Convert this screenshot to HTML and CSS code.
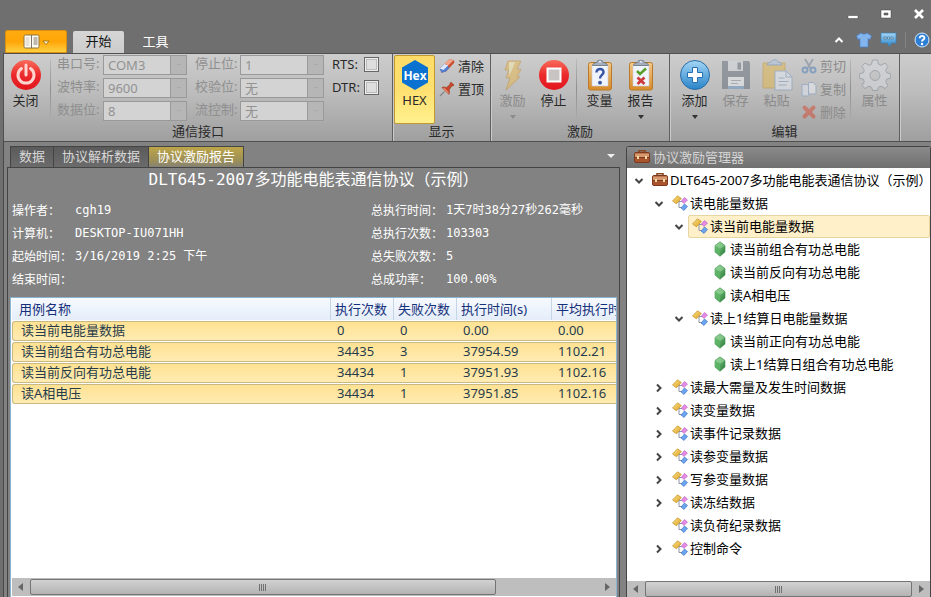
FILE: index.html
```html
<!DOCTYPE html>
<html lang="zh-CN">
<head>
<meta charset="utf-8">
<meta name="viewport" content="width=device-width, initial-scale=1">
<title>协议激励报告</title>
<link rel="stylesheet" href="styles.css">
</head>
<body>
<svg class="defs" aria-hidden="true">
  <defs>
    <linearGradient id="gold" x1="0" y1="0" x2="1" y2="1"><stop offset="0" stop-color="#fde98e"/><stop offset="1" stop-color="#d99a1c"/></linearGradient>
    <linearGradient id="leaf" x1="0" y1="0" x2="1" y2="1"><stop offset="0" stop-color="#9ad89c"/><stop offset="1" stop-color="#237a34"/></linearGradient>
    <linearGradient id="red" x1="0" y1="0" x2="0" y2="1"><stop offset="0" stop-color="#f96a5a"/><stop offset=".5" stop-color="#ea2a2c"/><stop offset="1" stop-color="#e3141c"/></linearGradient>
    <linearGradient id="blue" x1="0" y1="0" x2="0" y2="1"><stop offset="0" stop-color="#a4d6f6"/><stop offset="1" stop-color="#2884c8"/></linearGradient>
    <linearGradient id="board" x1="0" y1="0" x2="0" y2="1"><stop offset="0" stop-color="#f4c987"/><stop offset="1" stop-color="#d88a28"/></linearGradient>
    <symbol id="case" viewBox="0 0 16 16">
      <path d="M5 4V1.800h6V4" fill="none" stroke="#8a4a26" stroke-width="1.600"/>
      <rect x=".5" y="3.500" width="15" height="10" rx="1.500" fill="#a9542d" stroke="#7d3a1e"/>
      <path d="M1 4.500h14v3.500H1z" fill="#d79a70"/><path d="M1 8.500h14" stroke="#7b3a20"/>
      <path d="M3 7h2v3H3zM11 7h2v3h-2z" fill="#f4d9a0"/>
    </symbol>
    <symbol id="node" viewBox="0 0 16 16">
      <path d="M7 6.500v6h4M7 6.500h4" fill="none" stroke="#8b93a8"/>
      <path d="M.5 6 5.500.8 9.300 3.500 4.500 8.800z" fill="url(#gold)" stroke="#c38d20" stroke-width=".7"/>
      <path d="m12.500 2.500 3 2.500-3.500 3.500-2.500-2.500z" fill="#e58be4" stroke="#b55bc0" stroke-width=".6"/>
      <path d="m12.500 9 3 2.500-3.500 4-3-2.500z" fill="#6ba5f0" stroke="#3769b8" stroke-width=".6"/>
    </symbol>
    <symbol id="gem" viewBox="0 0 16 16">
      <path d="M8 .8 13 4.500v6.500L8 15.300 3 11V4.500z" fill="url(#leaf)" stroke="#3c8f48" stroke-width=".6"/>
      <path d="m3.300 4.800 4.700 3 4.700-3L8 1.200z" fill="#8fd293" opacity=".7"/><path d="M8 8v6.800L3.300 10.800v-6z" fill="#5bb565" opacity=".8"/>
    </symbol>
    <symbol id="down" viewBox="0 0 10 10"><path d="m1.500 3 3.500 3.500L8.500 3" fill="none" stroke="#444" stroke-width="2"/></symbol>
    <symbol id="right" viewBox="0 0 10 10"><path d="m3 1.500 3.500 3.500L3 8.500" fill="none" stroke="#444" stroke-width="2"/></symbol>
    <symbol id="clip" viewBox="0 0 32 32">
      <rect x="4.500" y="3.500" width="23" height="27.500" rx="2" fill="url(#board)" stroke="#b87a2c"/>
      <path d="M8 6h16v21H8z" fill="#f0f4fd" stroke="#c7cede" stroke-width=".6"/>
      <path d="M8.500 6.500c0-2 2-2.500 4-3C13 .5 19 .5 19.500 3.500c2 .5 4 1 4 3z" fill="#a5afbb" stroke="#66717f" stroke-width=".8"/><circle cx="16" cy="2.800" r="1" fill="#eef"/>
    </symbol>
  </defs>
</svg>
<div class="window">
  <header class="titlebar">
    <div class="caption">
      <button class="cap" aria-label="最小化"><svg width="12" height="12" viewBox="0 0 12 12"><path d="M1 7.500h10v3H1z" fill="#fff" stroke="#444" stroke-width=".5"/></svg></button>
      <button class="cap" aria-label="最大化"><svg width="12" height="12" viewBox="0 0 12 12"><path d="M1 2h10v8H1zm3 3v2h4V5z" fill="#fff" fill-rule="evenodd" stroke="#444" stroke-width=".5"/></svg></button>
      <button class="cap" aria-label="关闭窗口"><svg width="12" height="12" viewBox="0 0 12 12"><path d="m2 2 8 8m0-8-8 8" stroke="#fff" stroke-width="2.600"/></svg></button>
    </div>
    <nav class="tabs">
      <button class="file" aria-label="文件">
        <svg width="28" height="16" viewBox="0 0 28 16"><rect x="2" y="1" width="15" height="13" rx="1.500" fill="#fffdf4" stroke="#8a7440"/><path d="M9.500 1v13M11.500 4h4M11.500 6h4M11.500 8h4M11.500 10h4" stroke="#7c7464"/><path d="M3.500 3h4v9h-4z" fill="#e7e3d8"/><path d="M21 7h6l-3 3.500z" fill="#fff6c0" stroke="#8d6c18" stroke-width=".8"/></svg>
      </button>
      <button class="tab current">开始</button>
      <button class="tab">工具</button>
      <div class="tools">
        <button class="mini" aria-label="折叠"><svg width="10" height="10" viewBox="0 0 10 10"><path d="M1.500 7 5 3.500 8.500 7" fill="none" stroke="#fff" stroke-width="2"/></svg></button>
        <button class="mini" aria-label="皮肤"><svg width="16" height="16" viewBox="0 0 16 16"><path d="M5 1q3 2.500 6 0l4.500 3-1.500 3.500-2-.8V15H4V6.700l-2 .8L.5 4z" fill="#82b5ee" stroke="#4c7fca" stroke-width=".7"/></svg></button>
        <button class="mini" aria-label="消息"><svg width="17" height="16" viewBox="0 0 17 16"><path d="M1 1h15v10h-4.500L9.500 14.500 7.500 11H1z" fill="url(#blue)" stroke="#3c83b5" stroke-width=".7"/><path d="M4 5h2v2H4zm3.500 0h2v2h-2zm3.500 0h2v2h-2z" fill="#d4ecfb" stroke="#3b6285" stroke-width=".6"/></svg></button>
        <span class="bar"></span>
        <button class="mini" aria-label="帮助"><svg width="16" height="16" viewBox="0 0 16 16"><circle cx="8" cy="8" r="7" fill="#2d7fd6" stroke="#d4e8fc"/><path d="M5.700 6.300c0-3.300 5-3 4.700-.2C10.200 7.700 8 7.600 8 9.500" fill="none" stroke="#fff" stroke-width="1.900"/><circle cx="8" cy="12" r="1.200" fill="#fff"/></svg></button>
      </div>
    </nav>
  </header>

  <section class="ribbon">
    <div class="group comm">
      <div class="items">
        <button class="big"><svg width="32" height="32" viewBox="0 0 32 32"><circle cx="16" cy="16" r="15" fill="url(#red)"/><path d="M11.500 9.500a8 8 0 1 0 9 0M16 6v10" fill="none" stroke="#ffd5d0" stroke-width="3" stroke-linecap="round"/></svg><span>关闭</span></button>
        <i class="rule"></i>
        <div class="fields">
          <label for="port">串口号:</label><select id="port" disabled><option>COM3</option></select>
          <label for="stop">停止位:</label><select id="stop" disabled><option>1</option></select>
          <label for="baud">波特率:</label><select id="baud" disabled><option>9600</option></select>
          <label for="parity">校验位:</label><select id="parity" disabled><option>无</option></select>
          <label for="bits">数据位:</label><select id="bits" disabled><option>8</option></select>
          <label for="flow">流控制:</label><select id="flow" disabled><option>无</option></select>
        </div>
        <div class="checks">
          <label for="rts">RTS:</label><input type="checkbox" id="rts">
          <label for="dtr">DTR:</label><input type="checkbox" id="dtr">
        </div>
      </div>
      <div class="name">通信接口</div>
    </div>

    <div class="group show">
      <div class="items">
        <button class="big pressed"><svg width="32" height="32" viewBox="0 0 32 32"><path d="M16 1 29 8.500v15L16 31 3 23.500v-15z" fill="#0b72d2"/><text x="16" y="20.500" text-anchor="middle" class="hex">Hex</text></svg><span>HEX</span></button>
        <div class="stack">
          <button class="small"><svg width="16" height="16" viewBox="0 0 16 16"><path d="M.8 10.500 10 1.500l4.500.5 1 2.500L7 13.500l-4.500 1.200z" fill="#c94f30"/><path d="M.8 10.500 5.500 6l5 3.800-3.500 3.700-4.500 1.200z" fill="#4f7fd0"/><path d="M.8 10.500 5.500 6l3.800 1.200L4.500 12z" fill="#dbe9ff"/><path d="M5.500 6 10 1.500l4.500.8-5 5z" fill="#f3a58c"/></svg><span>清除</span></button>
          <button class="small"><svg width="16" height="16" viewBox="0 0 16 16"><path d="m1 15 4.500-4.500" stroke="#888" stroke-width="1.200"/><path d="M3 6.500c1.500-.8 3-.6 4.300.2L11 3.500c-.2-1 .2-1.800 1-2.300L15 4c-.6.900-1.400 1.200-2.300 1L10 9c.7 1.600.7 3-.2 4.300z" fill="#c9472a" stroke="#94351c" stroke-width=".6"/><path d="m4.500 7 5 5" stroke="#ec8a70" stroke-width="1.200"/></svg><span>置顶</span></button>
        </div>
      </div>
      <div class="name">显示</div>
    </div>

    <div class="group run">
      <div class="items">
        <button class="big" disabled><svg width="32" height="32" viewBox="0 0 32 32"><path d="M11 2h13l-4 8h4l-4 8h3L9 31l4-12H9l3-8H8z" fill="#eeb43c" stroke="#c68a20"/><path d="M12 3h6l-3 8-3 6z" fill="#fff0a8"/></svg><span>激励</span><i class="more"></i></button>
        <button class="big"><svg width="32" height="32" viewBox="0 0 32 32"><circle cx="16" cy="16" r="15" fill="url(#red)"/><path d="M9.500 9.500h13v13h-13z" fill="#c9c4c4" stroke="#fff" stroke-width="2"/></svg><span>停止</span></button>
        <i class="rule"></i>
        <button class="big"><svg width="32" height="32" viewBox="0 0 32 32"><use href="#clip"/><path d="M12.500 13.500c0-5 7.500-4.500 7 0-.3 2.500-3.500 2.500-3.500 6" fill="none" stroke="#3654a4" stroke-width="2.400"/><circle cx="16" cy="23.700" r="1.900" fill="#3654a4"/></svg><span>变量</span></button>
        <button class="big"><svg width="32" height="32" viewBox="0 0 32 32"><use href="#clip"/><path d="m12 12 3 3 6-5.500" fill="none" stroke="#599d27" stroke-width="2.500"/><path d="m12.500 18.500 7 6.500m0-6.500-7 6.500" stroke="#cf3b3b" stroke-width="2.800"/></svg><span>报告</span><i class="more"></i></button>
      </div>
      <div class="name">激励</div>
    </div>

    <div class="group edit">
      <div class="items">
        <button class="big"><svg width="32" height="32" viewBox="0 0 32 32"><circle cx="16" cy="16" r="14.500" fill="url(#blue)" stroke="#286da8"/><path d="M13.500 8.500h5v5h5v5h-5v5h-5v-5h-5v-5h5z" fill="#fff" stroke="#276eb0"/></svg><span>添加</span><i class="more"></i></button>
        <button class="big" disabled><svg width="32" height="32" viewBox="0 0 32 32"><path d="M2 2h27l1 2v26H2z" fill="#55606f"/><path d="M8 2h15v10H8z" fill="#d5dae1"/><path d="M17.500 3.500h3.500v7h-3.500z" fill="#53606f"/><path d="M8 18h16v12H8z" fill="#f2f5f9"/><path d="M8 27h16v3H8z" fill="#5e8fc4"/><path d="M11 21.500h10M11 24.500h7" stroke="#8493a5"/></svg><span>保存</span></button>
        <button class="big" disabled><svg width="32" height="32" viewBox="0 0 32 32"><path d="M2 4h22v25H2z" fill="#e6b436" stroke="#c29121"/><path d="M6 6c0-3 3-2 4-3 1-3 6-3 7 0 1 1 4 0 4 3z" fill="#a9c4e4" stroke="#5d7ca5"/><path d="M14 12h11l6 6v13H14z" fill="#eaf2fd" stroke="#7597c3"/><path d="M25 12v6h6M17.500 19h6M17.500 22.500h10M17.500 26h8" fill="none" stroke="#7597c3"/></svg><span>粘贴</span></button>
        <div class="stack">
          <button class="small" disabled><svg width="16" height="16" viewBox="0 0 16 16"><path d="m4 1 6 10M12 1 6 11" stroke="#66788f" stroke-width="1.800"/><circle cx="4" cy="12" r="2.500" fill="none" stroke="#3972b8" stroke-width="1.900"/><circle cx="12" cy="12" r="2.500" fill="none" stroke="#3972b8" stroke-width="1.900"/></svg><span>剪切</span></button>
          <button class="small" disabled><svg width="16" height="16" viewBox="0 0 16 16"><path d="M1 3.500h5l2 2V15H1z" fill="#e5effc" stroke="#7597c3"/><path d="M7.500 1.500H12l3 3V13H7.500z" fill="#f4f8ff" stroke="#7597c3"/></svg><span>复制</span></button>
          <button class="small" disabled><svg width="16" height="16" viewBox="0 0 16 16"><path d="m3.500 3.500 9 9m0-9-9 9" stroke="#dc3c24" stroke-width="4" stroke-linecap="round"/></svg><span>删除</span></button>
        </div>
        <i class="rule"></i>
        <button class="big" disabled><svg width="32" height="32" viewBox="0 0 32 32"><path d="m13.500 1 5 0 1 4.300 2.500 1L26 4l3 3.300-2.300 4 1 2.500 4 1v4.400l-4 1-1 2.500 2.300 4L26 29.500l-4-2.300-2.500 1-1 3.300h-5l-1-3.300-2.500-1-4 2.300-3-2.800 2.300-4-1-2.500-4-1v-4.400l4-1 1-2.500L3 7.300 6 4l4 2.300 2.500-1zM16 11.500a5 5 0 1 0 0 10 5 5 0 0 0 0-10z" fill="#d8dde3" fill-rule="evenodd" stroke="#75808e"/></svg><span>属性</span></button>
      </div>
      <div class="name">编辑</div>
    </div>
  </section>

  <main class="workspace">
    <section class="document">
      <nav class="doctabs">
        <button>数据</button><button>协议解析数据</button><button class="active">协议激励报告</button>
        <i class="list"></i>
      </nav>
      <div class="report">
        <h1>DLT645-2007多功能电能表通信协议（示例）</h1>
        <div class="summary">
          <dl>
            <dt>操作者：</dt><dd>cgh19</dd>
            <dt>计算机：</dt><dd>DESKTOP-IU071HH</dd>
            <dt>起始时间：</dt><dd>3/16/2019 2:25 下午</dd>
            <dt>结束时间：</dt><dd></dd>
          </dl>
          <dl>
            <dt>总执行时间：</dt><dd>1天7时38分27秒262毫秒</dd>
            <dt>总执行次数：</dt><dd>103303</dd>
            <dt>总失败次数：</dt><dd>5</dd>
            <dt>总成功率：</dt><dd>100.00%</dd>
          </dl>
        </div>
        <div class="grid">
          <div class="view">
            <table>
              <colgroup><col class="c-name"><col class="c-count"><col class="c-count"><col class="c-time"><col class="c-avg"></colgroup>
              <thead><tr><th>用例名称</th><th>执行次数</th><th>失败次数</th><th>执行时间(s)</th><th>平均执行时间</th></tr></thead>
              <tbody>
                <tr><td>读当前电能量数据</td><td>0</td><td>0</td><td>0.00</td><td>0.00</td></tr>
                <tr><td>读当前组合有功总电能</td><td>34435</td><td>3</td><td>37954.59</td><td>1102.21</td></tr>
                <tr><td>读当前反向有功总电能</td><td>34434</td><td>1</td><td>37951.93</td><td>1102.16</td></tr>
                <tr><td>读A相电压</td><td>34434</td><td>1</td><td>37951.85</td><td>1102.16</td></tr>
              </tbody>
            </table>
          </div>
          <div class="scroll"><i class="prev"></i><div class="track"><div class="thumb wide"></div></div><i class="next"></i></div>
        </div>
      </div>
    </section>

    <aside class="manager">
      <h2><svg width="16" height="16"><use href="#case"/></svg>协议激励管理器</h2>
      <div class="treebox">
        <ul class="tree">
          <li><div class="row"><svg class="exp"><use href="#down"/></svg><span class="entry"><svg class="ico"><use href="#case"/></svg>DLT645-2007多功能电能表通信协议（示例）</span></div>
            <ul>
              <li><div class="row"><svg class="exp"><use href="#down"/></svg><span class="entry"><svg class="ico"><use href="#node"/></svg>读电能量数据</span></div>
                <ul>
                  <li><div class="row"><svg class="exp"><use href="#down"/></svg><span class="entry selected"><svg class="ico"><use href="#node"/></svg>读当前电能量数据</span></div>
                    <ul>
                      <li><div class="row"><i class="exp"></i><span class="entry"><svg class="ico"><use href="#gem"/></svg>读当前组合有功总电能</span></div></li>
                      <li><div class="row"><i class="exp"></i><span class="entry"><svg class="ico"><use href="#gem"/></svg>读当前反向有功总电能</span></div></li>
                      <li><div class="row"><i class="exp"></i><span class="entry"><svg class="ico"><use href="#gem"/></svg>读A相电压</span></div></li>
                    </ul>
                  </li>
                  <li><div class="row"><svg class="exp"><use href="#down"/></svg><span class="entry"><svg class="ico"><use href="#node"/></svg>读上1结算日电能量数据</span></div>
                    <ul>
                      <li><div class="row"><i class="exp"></i><span class="entry"><svg class="ico"><use href="#gem"/></svg>读当前正向有功总电能</span></div></li>
                      <li><div class="row"><i class="exp"></i><span class="entry"><svg class="ico"><use href="#gem"/></svg>读上1结算日组合有功总电能</span></div></li>
                    </ul>
                  </li>
                </ul>
              </li>
              <li><div class="row"><svg class="exp"><use href="#right"/></svg><span class="entry"><svg class="ico"><use href="#node"/></svg>读最大需量及发生时间数据</span></div></li>
              <li><div class="row"><svg class="exp"><use href="#right"/></svg><span class="entry"><svg class="ico"><use href="#node"/></svg>读变量数据</span></div></li>
              <li><div class="row"><svg class="exp"><use href="#right"/></svg><span class="entry"><svg class="ico"><use href="#node"/></svg>读事件记录数据</span></div></li>
              <li><div class="row"><svg class="exp"><use href="#right"/></svg><span class="entry"><svg class="ico"><use href="#node"/></svg>读参变量数据</span></div></li>
              <li><div class="row"><svg class="exp"><use href="#right"/></svg><span class="entry"><svg class="ico"><use href="#node"/></svg>写参变量数据</span></div></li>
              <li><div class="row"><svg class="exp"><use href="#right"/></svg><span class="entry"><svg class="ico"><use href="#node"/></svg>读冻结数据</span></div></li>
              <li><div class="row"><i class="exp"></i><span class="entry"><svg class="ico"><use href="#node"/></svg>读负荷纪录数据</span></div></li>
              <li><div class="row"><svg class="exp"><use href="#right"/></svg><span class="entry"><svg class="ico"><use href="#node"/></svg>控制命令</span></div></li>
            </ul>
          </li>
        </ul>
        <div class="scroll"><i class="prev"></i><div class="track"><div class="thumb"></div></div><i class="next"></i></div>
      </div>
    </aside>
  </main>
</div>
</body>
</html>
```
FILE: styles.css
```css
* { box-sizing: border-box; }

body {
  margin: 0;
  background: #6f6f6f;
  font: 13px/18px "Noto Sans", "Noto Sans CJK SC", sans-serif;
  color: #2a2a2a;
}

button, select, input {
  margin: 0;
  padding: 0;
  border: 0;
  background: none;
  font: inherit;
  color: inherit;
}

svg { display: block; flex: none; }
.defs { position: absolute; width: 0; height: 0; }
ul, dl, dd, h1, h2 { margin: 0; padding: 0; font-weight: 400; }
ul { list-style: none; }

.window {
  display: flex;
  flex-direction: column;
  height: 100vh;
  padding-left: 3px;
}

/* Title bar */
.caption {
  display: flex;
  justify-content: flex-end;
  gap: 21px;
  height: 29px;
  padding: 0 6px 2px 0;
}
.cap { display: flex; align-items: center; }
.tabs {
  display: flex;
  align-items: flex-end;
  height: 24px;
  padding: 0 2px;
}
.file {
  display: flex;
  align-items: center;
  justify-content: center;
  width: 62px;
  height: 23px;
  margin-right: 6px;
  border: 1px solid #d98f10;
  border-radius: 2px 2px 0 0;
  background: linear-gradient(#ffab10, #ffa508 50%, #ffd040);
}
.tab { width: 51px; height: 22px; margin-right: 6px; padding-bottom: 2px; color: #fff; }
.tab.current {
  border-radius: 2px 2px 0 0;
  background: linear-gradient(#d6d6d6, #cccccc);
  color: #111;
}
.tools {
  display: flex;
  align-items: center;
  gap: 8px;
  height: 24px;
  margin-left: auto;
  padding-bottom: 2px;
}
.mini:first-child { margin-right: 4px; }
.mini:last-child { margin-right: -1px; }
.bar { width: 1px; height: 16px; background: #858585; }

/* Ribbon */
.ribbon {
  display: flex;
  height: 89px;
  flex: none;
  border: solid #505050;
  border-width: 1px 0 1px 1px;
  background: linear-gradient(#cdcdcd, #bcbcbc 45%, #9f9f9f);
}
.group {
  display: flex;
  flex-direction: column;
  flex: none;
  border-right: 1px solid #606060;
  box-shadow: 1px 0 #cacaca;
}
.items { display: flex; height: 69px; padding: 0 1px; }
.name { text-align: center; line-height: 16px; }
.comm { width: 389px; }
.show { width: 98px; }
.run { width: 179px; }
.edit { width: 230px; }
.edit .items { padding-left: 4px; }

.big {
  display: flex;
  flex-direction: column;
  align-items: center;
  flex: none;
  width: 41px;
  height: 69px;
  padding-top: 4px;
  border: 1px solid transparent;
  border-radius: 2px;
}
.big.pressed {
  margin-top: 1px;
  padding-top: 3px;
  border-color: #c09a30;
  background: linear-gradient(#ffdc68, #ffe070 50%, #fff08c);
}
.big:disabled, .small:disabled { color: #8b8b8b; }
.big:disabled svg, .small:disabled svg { opacity: .45; }
.hex { font: bold 12px "Open Sans", sans-serif; fill: #fff; }
.more {
  margin-top: 6px;
  border: solid transparent;
  border-width: 4px 3px 0;
  border-top-color: #333;
}
.big:disabled .more { border-top-color: #8b8b8b; }
.rule {
  flex: none;
  width: 1px;
  height: 60px;
  margin: 5px 2px 0;
  background: linear-gradient(#bbb, #8f8f8f 50%, #aaa);
}
.comm .rule, .edit .rule { margin-left: 4px; margin-right: 3px; }
.stack { display: flex; flex-direction: column; gap: 3px; padding: 2px 0 0 4px; }
.small { display: flex; align-items: center; gap: 3px; height: 20px; }

.fields {
  display: grid;
  grid-template-columns: 46px 84px 53px 84px;
  grid-auto-rows: 20px;
  gap: 3px 0;
  padding: 1px 0 0 3px;
  line-height: 16px;
  color: #8f8f8f;
}
.fields label:nth-of-type(even) { margin-left: 8px; }
.fields select {
  appearance: none;
  width: 84px;
  height: 20px;
  padding-left: 4px;
  border: 1px solid #999;
  background:
    linear-gradient(#aaa, #aaa) right 5px top 8px / 4px 1px no-repeat,
    linear-gradient(#999, #999) right 15px top 0 / 1px 100% no-repeat,
    linear-gradient(#b6b6b6, #b6b6b6) right / 15px 100% no-repeat,
    #d3d3d3;
  opacity: 1;
  color: #929292;
}
.checks {
  display: grid;
  grid-template-columns: 32px 16px;
  grid-auto-rows: 20px;
  align-content: start;
  align-items: center;
  row-gap: 3px;
  padding-left: 8px;
}
.checks input {
  appearance: none;
  width: 15px;
  height: 15px;
  border: 1px solid #666;
  background: #dedede;
  box-shadow: inset 0 0 0 1px #eee, inset 0 0 0 2px #bcbcbc;
}

/* Workspace */
.workspace {
  display: flex;
  flex: 1;
  min-height: 0;
  gap: 6px;
  padding: 3px 0 0 3px;
  border-left: 1px solid #484848;
  background: #828282;
}
.document { display: flex; flex-direction: column; flex: 1; min-width: 0; }
.doctabs { display: flex; align-items: center; height: 22px; padding: 1px 0 0 3px; }
.doctabs button {
  height: 21px;
  padding: 0 8px 2px;
  border: 1px solid #444;
  border-bottom: 0;
  border-right: 0;
  background: linear-gradient(#5b5b5b, #6b6b6b);
  color: #d8d8d8;
}
.doctabs button.active {
  border-right: 1px solid #444;
  background: linear-gradient(#bda548, #9b8e58 70%, #858276);
  color: #fff;
}
.list {
  margin: 0 5px 2px auto;
  border: solid transparent;
  border-width: 4px 4px 0;
  border-top-color: #eee;
}
.report {
  display: flex;
  flex-direction: column;
  flex: 1;
  min-height: 0;
  padding: 0 2px;
  border: solid #444;
  border-width: 1px 1px 0;
  color: #fff;
}
.report h1 {
  text-align: center;
  font: 16px/24px "DejaVu Sans Mono", "Noto Sans CJK SC", monospace;
}
.summary {
  display: grid;
  grid-template-columns: 359px 1fr;
  padding: 6px 0 7px 2px;
}
.summary dl { display: grid; grid-auto-rows: 23px; align-items: center; }
.summary dl:first-child { grid-template-columns: 63px 1fr; }
.summary dl:last-child { grid-template-columns: 75px 1fr; }
.summary dt { white-space: nowrap; font: 12px/18px "Noto Sans CJK TC", sans-serif; }
.summary dd { font: 12px/18px "DejaVu Sans Mono", "Noto Sans CJK SC", monospace; }

.grid {
  display: flex;
  flex-direction: column;
  flex: 1;
  min-height: 0;
  padding-left: 1px;
  border: 1px solid #8bb4d0;
  border-bottom: 0;
  background: #fff;
}
.view { flex: 1; overflow: hidden; }
.view table {
  width: 700px;
  table-layout: fixed;
  border-collapse: separate;
  border-spacing: 0 1px;
  margin-top: -1px;
}
.c-name { width: 319px; }
.c-count { width: 63px; }
.c-time { width: 95px; }
.view th {
  height: 22px;
  padding: 0 4px;
  border-right: 1px solid #c6d5e6;
  background: linear-gradient(#f7faff, #e4edf9);
  color: #15307a;
  font-weight: 400;
  line-height: 16px;
  text-align: left;
  white-space: nowrap;
}
.view th:first-child { padding-left: 7px; }
.view td {
  height: 20px;
  padding: 0 6px 2px;
  border: solid #cbb984;
  border-width: 1px 0;
  background: linear-gradient(#ffe292, #ffebb2);
  color: #263c4c;
  line-height: 16px;
}
.view td:first-child { padding-left: 8px; border-left-width: 1px; border-radius: 3px 0 0 3px; }

/* Scroll bars */
.scroll {
  display: flex;
  align-items: center;
  flex: none;
  height: 18px;
  padding: 0 6px;
  background: #bebebe;
}
.prev, .next { border: solid transparent; border-width: 4px 5px; }
.prev { border-left-width: 0; border-right-color: #666; }
.next { border-right-width: 0; border-left-color: #666; }
.track { flex: 1; margin: 0 7px; }
.thumb {
  height: 16px;
  border: 1px solid #747474;
  border-radius: 2px;
  background:
    repeating-linear-gradient(90deg, #707070 0 1px, transparent 1px 2px) center / 8px 7px no-repeat,
    linear-gradient(#d2d2d2, #b3b3b3);
}
.thumb.wide { width: 82%; }
.grid .scroll { margin-bottom: 1px; }
.treebox .scroll { height: 16px; }

/* Manager */
.manager {
  display: flex;
  flex-direction: column;
  flex: none;
  width: 305px;
  margin-top: 1px;
  border: solid #444;
  border-width: 1px 1px 0;
  border-radius: 3px 3px 0 0;
}
.manager h2 {
  display: flex;
  align-items: center;
  gap: 3px;
  height: 21px;
  padding: 0 0 2px 7px;
  font-size: 13px;
  background: linear-gradient(#8a8a8a, #707070);
  color: #d4d4d4;
}
.treebox {
  display: flex;
  flex-direction: column;
  flex: 1;
  min-height: 0;
  background: #fff;
  color: #000;
}
.tree { flex: 1; overflow: hidden; padding: 1px 0 0 3px; }
.tree ul { padding-left: 20px; }
.row { display: flex; align-items: center; height: 23px; }
.exp { width: 10px; height: 10px; margin: 0 4px; flex: none; }
.entry {
  display: flex;
  align-items: center;
  flex: 1;
  gap: 2px;
  height: 23px;
  padding: 0 0 1px 3px;
  border: 1px solid transparent;
  border-radius: 2px;
  white-space: nowrap;
}
.selected { border-color: #e8d6a0; background: #fff0ca; }
.ico { width: 16px; height: 16px; }
```
